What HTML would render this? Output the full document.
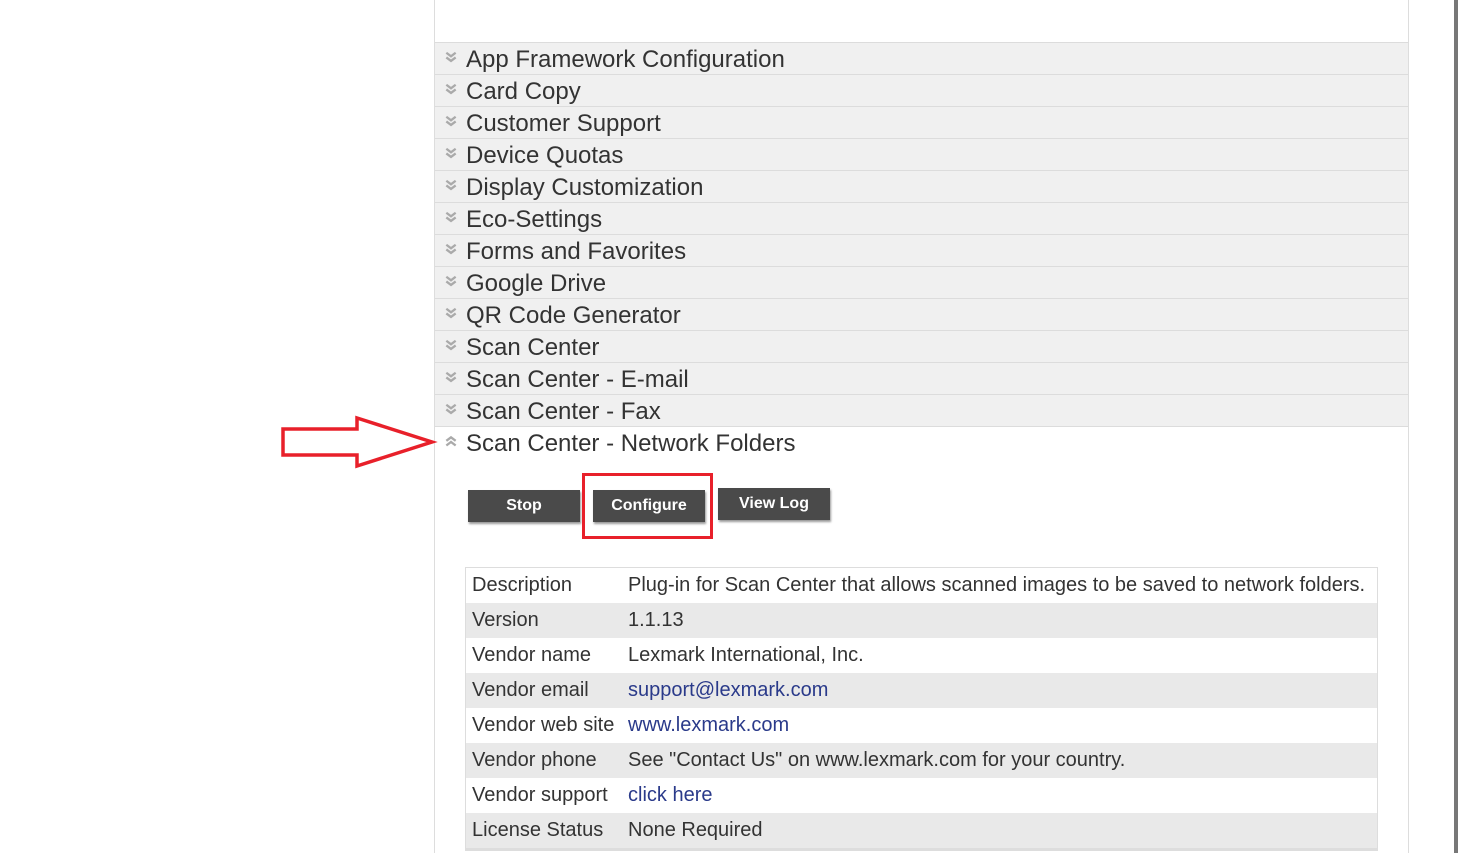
<!DOCTYPE html>
<html><head><style>
body{margin:0;width:1458px;height:853px;background:#fff;position:relative;overflow:hidden;font-family:"Liberation Sans",Arial,sans-serif}
.box{position:absolute;left:434px;top:0;width:973px;height:853px;border-left:1px solid #ddd;border-right:1px solid #ddd}
.row{position:absolute;left:435px;width:973px;height:31px;background:#f0f0f0;border-top:1px solid #dcdcdc;font-size:24px;color:#333;line-height:33px}
.row span{position:absolute;left:31px;top:0}
.chev{position:absolute;left:9px;top:8px;width:14px;height:14px}
.sb{position:absolute;left:1454px;top:0;width:4px;height:853px;background:#777}
.btn{position:absolute;width:112px;height:32px;background:#4a4a4a;color:#fff;font-weight:bold;font-size:16px;text-align:center;line-height:32px;box-shadow:1px 2px 2px #999}
table{position:absolute;left:465px;top:567px;width:913px;border-collapse:collapse;border:1px solid #ddd;border-bottom:3px solid #ddd;font-size:20px;color:#333}
td{height:35px;padding:0 0 0 6px;white-space:nowrap}
tr:nth-child(even){background:#e9e9e9}
td:first-child{width:150px}
a{color:#2a3a8a;text-decoration:none}
</style></head><body>
<div class="box"></div>
<div class="sb"></div>
<div class="row" style="top:42px"><svg class="chev" viewBox="0 0 12 12"><path d="M2 1.5l4 3 4-3M2 5.5l4 3 4-3" stroke="#aaa" stroke-width="2" fill="none"/></svg><span>App Framework Configuration</span></div>
<div class="row" style="top:74px"><svg class="chev" viewBox="0 0 12 12"><path d="M2 1.5l4 3 4-3M2 5.5l4 3 4-3" stroke="#aaa" stroke-width="2" fill="none"/></svg><span>Card Copy</span></div>
<div class="row" style="top:106px"><svg class="chev" viewBox="0 0 12 12"><path d="M2 1.5l4 3 4-3M2 5.5l4 3 4-3" stroke="#aaa" stroke-width="2" fill="none"/></svg><span>Customer Support</span></div>
<div class="row" style="top:138px"><svg class="chev" viewBox="0 0 12 12"><path d="M2 1.5l4 3 4-3M2 5.5l4 3 4-3" stroke="#aaa" stroke-width="2" fill="none"/></svg><span>Device Quotas</span></div>
<div class="row" style="top:170px"><svg class="chev" viewBox="0 0 12 12"><path d="M2 1.5l4 3 4-3M2 5.5l4 3 4-3" stroke="#aaa" stroke-width="2" fill="none"/></svg><span>Display Customization</span></div>
<div class="row" style="top:202px"><svg class="chev" viewBox="0 0 12 12"><path d="M2 1.5l4 3 4-3M2 5.5l4 3 4-3" stroke="#aaa" stroke-width="2" fill="none"/></svg><span>Eco-Settings</span></div>
<div class="row" style="top:234px"><svg class="chev" viewBox="0 0 12 12"><path d="M2 1.5l4 3 4-3M2 5.5l4 3 4-3" stroke="#aaa" stroke-width="2" fill="none"/></svg><span>Forms and Favorites</span></div>
<div class="row" style="top:266px"><svg class="chev" viewBox="0 0 12 12"><path d="M2 1.5l4 3 4-3M2 5.5l4 3 4-3" stroke="#aaa" stroke-width="2" fill="none"/></svg><span>Google Drive</span></div>
<div class="row" style="top:298px"><svg class="chev" viewBox="0 0 12 12"><path d="M2 1.5l4 3 4-3M2 5.5l4 3 4-3" stroke="#aaa" stroke-width="2" fill="none"/></svg><span>QR Code Generator</span></div>
<div class="row" style="top:330px"><svg class="chev" viewBox="0 0 12 12"><path d="M2 1.5l4 3 4-3M2 5.5l4 3 4-3" stroke="#aaa" stroke-width="2" fill="none"/></svg><span>Scan Center</span></div>
<div class="row" style="top:362px"><svg class="chev" viewBox="0 0 12 12"><path d="M2 1.5l4 3 4-3M2 5.5l4 3 4-3" stroke="#aaa" stroke-width="2" fill="none"/></svg><span>Scan Center - E-mail</span></div>
<div class="row" style="top:394px"><svg class="chev" viewBox="0 0 12 12"><path d="M2 1.5l4 3 4-3M2 5.5l4 3 4-3" stroke="#aaa" stroke-width="2" fill="none"/></svg><span>Scan Center - Fax</span></div>
<div class="row" style="top:426px;background:#fff"><svg class="chev" viewBox="0 0 12 12"><path d="M2 5l4-3 4 3M2 9l4-3 4 3" stroke="#aaa" stroke-width="2" fill="none"/></svg><span>Scan Center - Network Folders</span></div>
<svg style="position:absolute;left:280px;top:415px" width="160" height="56"><path d="M3 14H77V3L152 27L77 51V40H3Z" fill="none" stroke="#e8202a" stroke-width="3.5"/></svg>
<div class="btn" style="left:468px;top:490px">Stop</div>
<div class="btn" style="left:593px;top:490px">Configure</div>
<div class="btn" style="left:718px;top:488px">View Log</div>
<div style="position:absolute;left:582px;top:473px;width:125px;height:60px;border:3px solid #e8202a"></div>
<table>
<tr><td>Description</td><td>Plug-in for Scan Center that allows scanned images to be saved to network folders.</td></tr>
<tr><td>Version</td><td>1.1.13</td></tr>
<tr><td>Vendor name</td><td>Lexmark International, Inc.</td></tr>
<tr><td>Vendor email</td><td><a>support@lexmark.com</a></td></tr>
<tr><td>Vendor web site</td><td><a>www.lexmark.com</a></td></tr>
<tr><td>Vendor phone</td><td>See "Contact Us" on www.lexmark.com for your country.</td></tr>
<tr><td>Vendor support</td><td><a>click here</a></td></tr>
<tr><td>License Status</td><td>None Required</td></tr>
</table>
</body></html>
